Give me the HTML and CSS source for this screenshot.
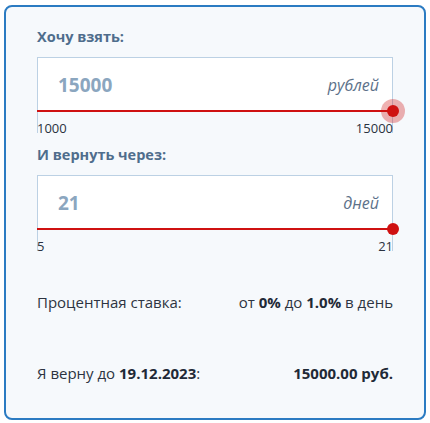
FILE: index.html
```html
<!DOCTYPE html>
<html lang="ru">
<head>
    <meta charset="UTF-8">
    <meta name="viewport" content="width=device-width, initial-scale=1.0">
    <title>Калькулятор займа</title>
    <link rel="stylesheet" href="styles.css">
</head>
<body>
    <!-- калькулятор займа -->
    <section class="calc">
        <div class="calc-label">Хочу взять:</div>
        <div class="slider">
            <div class="slider-field">
                <span class="slider-value">15000</span>
                <span class="slider-unit">рублей</span>
            </div>
            <div class="slider-track">
                <span class="slider-thumb slider-thumb-active"></span>
            </div>
            <div class="slider-range">
                <span>1000</span>
                <span>15000</span>
            </div>
        </div>

        <div class="calc-label">И вернуть через:</div>
        <div class="slider">
            <div class="slider-field">
                <span class="slider-value">21</span>
                <span class="slider-unit">дней</span>
            </div>
            <div class="slider-track">
                <span class="slider-thumb"></span>
            </div>
            <div class="slider-range">
                <span>5</span>
                <span>21</span>
            </div>
        </div>

        <!-- итог -->
        <div class="calc-row calc-rate">
            <span>Процентная ставка:</span>
            <span>от <b>0%</b> до <b>1.0%</b> в день</span>
        </div>
        <div class="calc-row calc-total">
            <span>Я верну до <b>19.12.2023</b>:</span>
            <b>15000.00 руб.</b>
        </div>
    </section>
</body>
</html>
```

FILE: styles.css
```css
/* базовые стили */
* {
    margin: 0;
    padding: 0;
    box-sizing: border-box;
}

body {
    font-family: 'Open Sans', 'Noto Sans', sans-serif;
    background: #ffffff;
    padding: 5px 4px;
}

/* карточка */
.calc {
    width: 422px;
    height: 415px;
    border: 2px solid #2b7bc2;
    border-radius: 8px;
    background: #f6f9fc;
    padding: 20px 31px 0;
}

.calc-label {
    font-size: 14.5px;
    font-weight: 700;
    line-height: 20px;
    color: #4f6d8c;
    margin-bottom: 10px;
}

/* слайдер */
.slider {
    margin-bottom: 9px;
}

.slider-field {
    height: 53px;
    background: #ffffff;
    border: 1px solid #bcd1e4;
    border-bottom: none;
    display: flex;
    align-items: center;
    justify-content: space-between;
    padding: 2px 13px 0 20px;
}

.slider-value {
    font-size: 19px;
    font-weight: 700;
    color: #8ba6bf;
}

.slider-unit {
    font-size: 16px;
    font-style: italic;
    color: #5c7189;
}

.slider-track {
    height: 2px;
    background: #cf1111;
    position: relative;
}

.slider-thumb {
    position: absolute;
    right: -6px;
    top: -5px;
    width: 12px;
    height: 12px;
    border-radius: 50%;
    background: #cf1111;
}

.slider-thumb-active {
    box-shadow: 0 0 0 6px rgba(207, 17, 17, 0.33);
}

.slider-range {
    display: flex;
    justify-content: space-between;
    font-size: 13px;
    line-height: 16px;
    color: #2a3240;
    padding-top: 8px;
    background:
        linear-gradient(#bcd1e4, #bcd1e4) left top / 1px 21px no-repeat,
        linear-gradient(#bcd1e4, #bcd1e4) right top / 1px 21px no-repeat;
}

/* строки итога */
.calc-row {
    display: flex;
    justify-content: space-between;
    font-size: 15px;
    line-height: 20px;
    color: #2d3441;
}

.calc-row b {
    color: #1f2a37;
}

.calc-rate {
    margin-top: 38px;
}

.calc-total {
    margin-top: 51px;
}
```
